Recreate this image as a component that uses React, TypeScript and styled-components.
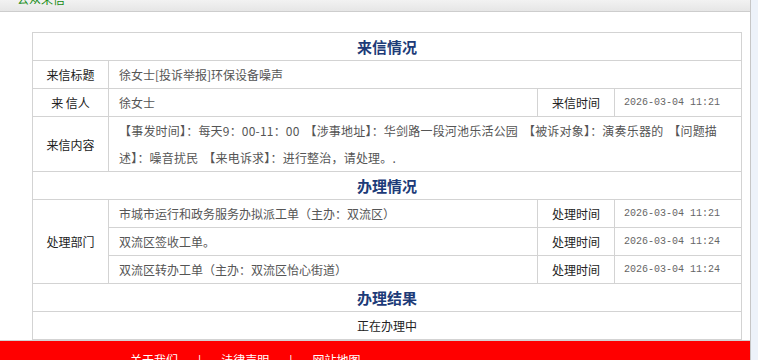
import React from "react"
import styled, { createGlobalStyle } from "styled-components"

const Global = createGlobalStyle`
  html, body {
    margin: 0;
    padding: 0;
    background: #edf2f9;
    font-family: "Noto Sans CJK SC", "Liberation Sans", sans-serif;
    overflow: hidden;
  }
`

const Page = styled.div`
  width: 750px;
  height: 360px;
  background: #fff;
  border-right: 1px solid #c6c6c6;
  display: flex;
  flex-direction: column;
  overflow: hidden;
`

const TopBar = styled.div`
  height: 11px;
  flex-shrink: 0;
  background: linear-gradient(#f2f2f2, #e6e6e6);
  border-bottom: 1px solid #cdcdcd;
  overflow: hidden;

  span {
    display: block;
    margin: -7px 0 0 17px;
    font-size: 12px;
    line-height: 12px;
    color: #118a11;
  }
`

const Content = styled.div`
  padding: 20px 0 0 32px;
  border-bottom: 1px solid #d2d2d2;
`

const Table = styled.table`
  width: 709px;
  border-collapse: collapse;
  table-layout: fixed;
  font-size: 12px;

  td {
    border: 1px solid #d3d3d3;
    line-height: 27px;
    padding: 0;
  }
`

const SectionTitle = styled.td`
  text-align: center;
  font-size: 15px;
  font-weight: bold;
  color: #1d3b78;
`

const Label = styled.td`
  text-align: center;
  color: #222;
`

const Value = styled.td<{ $center?: boolean; $loose?: boolean }>`
  color: #555;
  padding: 0 10px !important;
  text-align: ${(p) => (p.$center ? "center" : "left")};
  ${(p) => (p.$center ? "color: #222;" : "")}
  ${(p) => (p.$loose ? "letter-spacing: 0.2px; word-spacing: 2px;" : "")}
`

const Time = styled.td`
  color: #666;
  font-family: "Liberation Mono", "DejaVu Sans Mono", monospace;
  font-size: 10px;
  padding-left: 9px !important;
`

const Footer = styled.div`
  flex: 1;
  background: #ff0000;
  padding: 13px 0 0 130px;
  font-size: 12px;
  line-height: 12px;
  color: #fff;
  display: flex;
  white-space: nowrap;

  i {
    font-style: normal;
    margin: 0 20px;
  }
`

const steps = [
  { dept: "市城市运行和政务服务办拟派工单（主办：双流区）", time: "2026-03-04 11:21" },
  { dept: "双流区签收工单。", time: "2026-03-04 11:24" },
  { dept: "双流区转办工单（主办：双流区怡心街道）", time: "2026-03-04 11:24" },
]

const App = () => {
  return (
    <Page>
      <Global />
      <TopBar>
        <span>公众来信</span>
      </TopBar>
      <Content>
        <Table>
          <colgroup>
            <col style={{ width: 76 }} />
            <col style={{ width: 429 }} />
            <col style={{ width: 77 }} />
            <col style={{ width: 127 }} />
          </colgroup>
          <tbody>
            <tr>
              <SectionTitle colSpan={4}>来信情况</SectionTitle>
            </tr>
            <tr>
              <Label>来信标题</Label>
              <Value colSpan={3}>徐女士[投诉举报]环保设备噪声</Value>
            </tr>
            <tr>
              <Label>来 信人</Label>
              <Value>徐女士</Value>
              <Label>来信时间</Label>
              <Time>2026-03-04 11:21</Time>
            </tr>
            <tr>
              <Label>来信内容</Label>
              <Value colSpan={3} $loose>
                【事发时间】：每天9：00-11：00 【涉事地址】：华剑路一段河池乐活公园 【被诉对象】：演奏乐器的 【问题描述】：噪音扰民 【来电诉求】：进行整治，请处理。.
              </Value>
            </tr>
            <tr>
              <SectionTitle colSpan={4}>办理情况</SectionTitle>
            </tr>
            {steps.map((s, i) => (
              <tr key={i}>
                {i === 0 && <Label rowSpan={steps.length}>处理部门</Label>}
                <Value>{s.dept}</Value>
                <Label>处理时间</Label>
                <Time>{s.time}</Time>
              </tr>
            ))}
            <tr>
              <SectionTitle colSpan={4}>办理结果</SectionTitle>
            </tr>
            <tr>
              <Value colSpan={4} $center>
                正在办理中
              </Value>
            </tr>
          </tbody>
        </Table>
      </Content>
      <Footer>
        <span>关于我们</span>
        <i>|</i>
        <span>法律声明</span>
        <i>|</i>
        <span>网站地图</span>
      </Footer>
    </Page>
  )
}

export default App
